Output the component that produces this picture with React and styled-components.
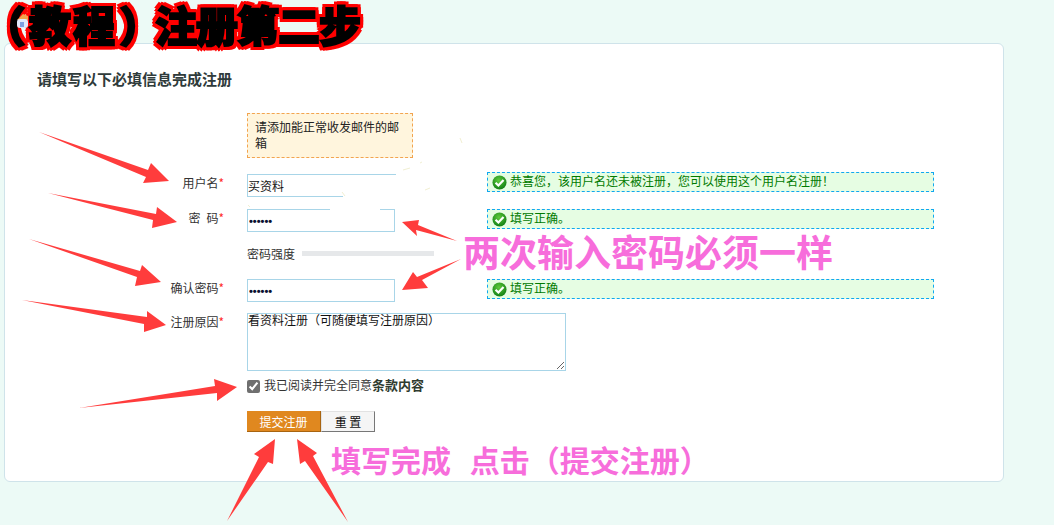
import React from "react";
import styled, { createGlobalStyle } from "styled-components";

const SANS = '"Noto Sans CJK SC", "Liberation Sans", sans-serif';

const GlobalStyle = createGlobalStyle`
  html, body {
    margin: 0;
    padding: 0;
    background: #ecfaf6;
  }
  * {
    box-sizing: border-box;
  }
`;

const ARROWS = [
  "39,132 148,170 151,163 169,181 143,183 146,177",
  "48,193 156,214 157,207 177,222 152,228 153,220",
  "29,239 140,271 142,265 161,282 135,286 137,277",
  "22,300 147,317 147,311 166,325 144,332 144,324",
  "79,408 215,386 214,379 237,387 217,401 217,393",
  "457,241 418,225 419,220 402,222 417,236 416,230",
  "461,259 417,277 413,272 402,290 428,288 422,280",
  "227,521 259,457 254,454 275,439 273,464 268,462",
  "348,522 313,456 317,453 297,439 300,464 305,461",
];

const SMUDGES = [
  { x: 396, y: 165, w: 60, h: 36 },
  { x: 343, y: 190, w: 60, h: 12 },
  { x: 330, y: 205, w: 50, h: 7 },
];

const SPECKS = [
  "403,170 410,168",
  "420,163 422,162",
  "425,190 430,188",
  "342,192 345,196",
  "248,205 250,207",
  "460,138 462,143",
];

const CheckIcon = () => (
  <svg width="15" height="15" viewBox="0 0 16 16">
    <defs>
      <radialGradient id="okGreen" cx="45%" cy="35%" r="70%">
        <stop offset="0%" stopColor="#5ecb3c" />
        <stop offset="100%" stopColor="#0c7a12" />
      </radialGradient>
    </defs>
    <circle cx="8" cy="8" r="7.5" fill="url(#okGreen)" />
    <path d="M3.8 8.3 L6.8 11.2 L12.3 5.4" fill="none" stroke="#fff" strokeWidth="2.4" />
  </svg>
);

const HomeIcon = () => (
  <svg width="11" height="14" viewBox="0 0 11 14">
    <path d="M0 6 L6 0 L11 2 L11 6 Z" fill="#f2a34a" />
    <rect x="0" y="5" width="11" height="9" rx="3" fill="#dfe9fb" />
    <rect x="3" y="8" width="4" height="5" fill="#7d9fe0" />
  </svg>
);

const Status = ({ children }) => (
  <StatusBox>
    <CheckIcon />
    <StatusText>{children}</StatusText>
  </StatusBox>
);

const App = () => {
  return (
    <Page>
      <GlobalStyle />
      <Header>
        <Title>
          <OpenParen>（</OpenParen>
          <TitleWide>教程</TitleWide>
          <CloseParen>）</CloseParen>
          注册第二步
        </Title>
        <HomeSlot>
          <HomeIcon />
        </HomeSlot>
      </Header>

      <Card>
        <Heading>请填写以下必填信息完成注册</Heading>

        <Tip>请添加能正常收发邮件的邮箱</Tip>

        <Row $top={16}>
          <Label>用户名<Star>*</Star></Label>
          <TextInput $wide type="text" defaultValue="买资料" readOnly />
          <StatusSlot $lift={2}>
            <Status>恭喜您，该用户名还未被注册，您可以使用这个用户名注册！</Status>
          </StatusSlot>
        </Row>

        <Row $top={12}>
          <Label>密&ensp;码<Star>*</Star></Label>
          <PasswordInput type="password" defaultValue="123456" readOnly />
          <StatusSlot>
            <Status>填写正确。</Status>
          </StatusSlot>
        </Row>

        <Row $top={12}>
          <span />
          <Strength>
            <span>密码强度</span>
            <StrengthBar />
          </Strength>
        </Row>

        <Row $top={17}>
          <Label>确认密码<Star>*</Star></Label>
          <PasswordInput type="password" defaultValue="123456" readOnly />
          <StatusSlot>
            <Status>填写正确。</Status>
          </StatusSlot>
        </Row>

        <Row $top={11}>
          <Label>注册原因<Star>*</Star></Label>
          <Reason defaultValue="看资料注册（可随便填写注册原因）" readOnly />
        </Row>

        <Row $top={8}>
          <span />
          <Agree>
            <AgreeBox type="checkbox" defaultChecked readOnly />
            <AgreeText>我已阅读并完全同意<b>条款内容</b></AgreeText>
          </Agree>
        </Row>

        <Row $top={18}>
          <span />
          <Buttons>
            <SubmitButton type="button">提交注册</SubmitButton>
            <ResetButton type="button">重 置</ResetButton>
          </Buttons>
        </Row>
      </Card>

      <Overlay viewBox="0 0 1054 525">
        {SMUDGES.map((s, i) => (
          <rect key={i} x={s.x} y={s.y} width={s.w} height={s.h} fill="#fff" />
        ))}
        {SPECKS.map((p, i) => (
          <polyline key={i} points={p} stroke="#f1efd2" strokeWidth="1" fill="none" />
        ))}
        {ARROWS.map((p, i) => (
          <polygon key={i} points={p} fill="#ff3c3c" />
        ))}
      </Overlay>

      <NoteSame>两次输入密码必须一样</NoteSame>
      <NoteSubmit>填写完成 点击（提交注册）</NoteSubmit>
    </Page>
  );
};

const Page = styled.div`
  position: relative;
  width: 1054px;
  height: 525px;
  overflow: hidden;
  background: #ecfaf6;
  font-family: ${SANS};
  font-size: 12px;
  color: #333;
`;

const Header = styled.div`
  position: relative;
  z-index: 2;
  height: 48px;
`;

const HomeSlot = styled.div`
  position: absolute;
  left: 17px;
  top: 14px;
  line-height: 0;
`;

const Title = styled.h1`
  margin: 0;
  padding-left: 3px;
  font-size: 42px;
  line-height: 48px;
  font-weight: 900;
  white-space: nowrap;
  letter-spacing: -1px;
  color: #000;
  -webkit-text-stroke: 2px #000;
  filter: drop-shadow(3px 0 0 #f00) drop-shadow(-3px 0 0 #f00) drop-shadow(0 3px 0 #f00) drop-shadow(0 -3px 0 #f00);
`;

const OpenParen = styled.span`
  margin-right: 6px;
  font-feature-settings: "palt";
`;

const TitleWide = styled.span`
  letter-spacing: 2px;
`;

const CloseParen = styled.span`
  margin: 0 14px 0 4px;
  font-feature-settings: "palt";
`;

const Card = styled.div`
  width: 1000px;
  height: 439px;
  margin: -5px 0 0 4px;
  padding-top: 26px;
  background: #fff;
  border: 1px solid #cfe3ea;
  border-radius: 6px;
`;

const Heading = styled.h2`
  margin: 0 0 0 32px;
  height: 18px;
  font-size: 15px;
  line-height: 18px;
  font-weight: 700;
  color: #2f3b3b;
`;

const Tip = styled.div`
  width: 166px;
  height: 45px;
  margin: 25px 0 0 242px;
  padding: 5px 7px;
  background: #fff5dd;
  border: 1px dashed #f2a44f;
  font-size: 12px;
  line-height: 16px;
  color: #222;
`;

const Row = styled.div`
  display: grid;
  grid-template-columns: 219px 217px 447px;
  column-gap: 23px;
  align-items: start;
  margin-top: ${(p) => p.$top}px;
`;

const Label = styled.label`
  text-align: right;
  line-height: 18px;
  color: #333;
`;

const Star = styled.em`
  font-style: normal;
  color: #ff2a2a;
`;

const TextInput = styled.input`
  width: ${(p) => (p.$wide ? "200px" : "148px")};
  height: 23px;
  padding: 0;
  background: #fff;
  border: 1px solid #a8d5e8;
  font-family: ${SANS};
  font-size: 12px;
  color: #111;
  outline: none;
`;

const PasswordInput = styled(TextInput)`
  padding-left: 1px;
  font-family: "Liberation Sans", sans-serif;
  font-size: 11px;
  font-weight: 700;
  color: #0a1030;
`;

const StatusSlot = styled.div`
  margin-top: ${(p) => (p.$lift ? -p.$lift : 0)}px;
`;

const StatusBox = styled.div`
  display: flex;
  align-items: center;
  gap: 3px;
  height: 20px;
  padding-left: 4px;
  background: #e6fde3;
  border: 1px dashed #10a8f0;
  color: #007a00;
`;

const StatusText = styled.span`
  margin-bottom: 2px;
  line-height: 16px;
`;

const Strength = styled.div`
  display: flex;
  align-items: center;
  gap: 7px;
  height: 18px;
  white-space: nowrap;
  color: #333;
`;

const StrengthBar = styled.div`
  width: 132px;
  height: 5px;
  background: #e6e8ea;
`;

const Reason = styled.textarea`
  width: 319px;
  height: 58px;
  padding: 0;
  background: #fff;
  border: 1px solid #a8d5e8;
  font-family: ${SANS};
  font-size: 12px;
  line-height: 12px;
  color: #111;
  outline: none;
`;

const Agree = styled.label`
  display: flex;
  align-items: center;
  gap: 4px;
  height: 14px;
  white-space: nowrap;
  color: #333;
`;

const AgreeText = styled.span`
  margin-bottom: 4px;

  b {
    font-size: 13px;
    font-weight: 700;
    color: #2f3b2f;
  }
`;

const AgreeBox = styled.input`
  width: 13px;
  height: 13px;
  margin: 0;
  accent-color: #6f6f6f;
`;

const Buttons = styled.div`
  display: flex;
  height: 21px;
`;

const SubmitButton = styled.button`
  width: 74px;
  height: 21px;
  padding: 0;
  background: #e0881f;
  border: 0;
  border-bottom: 1px solid #a86410;
  border-right: 1px solid #a86410;
  font-family: ${SANS};
  font-size: 12px;
  color: #fff;
`;

const ResetButton = styled.button`
  width: 54px;
  height: 21px;
  padding: 0;
  background: #f5f5f5;
  border: 1px solid #e2e2e2;
  border-bottom-color: #777;
  border-right-color: #777;
  font-family: ${SANS};
  font-size: 12px;
  color: #111;
`;

const Overlay = styled.svg`
  position: absolute;
  left: 0;
  top: 0;
  width: 1054px;
  height: 525px;
  pointer-events: none;
`;

const NoteSame = styled.div`
  position: absolute;
  left: 463px;
  top: 232px;
  font-size: 37px;
  line-height: 38px;
  font-weight: 700;
  white-space: nowrap;
  color: #f76ddb;
`;

const NoteSubmit = styled.div`
  position: absolute;
  left: 331px;
  top: 440px;
  font-size: 30px;
  line-height: 38px;
  font-weight: 700;
  word-spacing: 12px;
  white-space: nowrap;
  color: #f76ddb;
`;

export default App;
